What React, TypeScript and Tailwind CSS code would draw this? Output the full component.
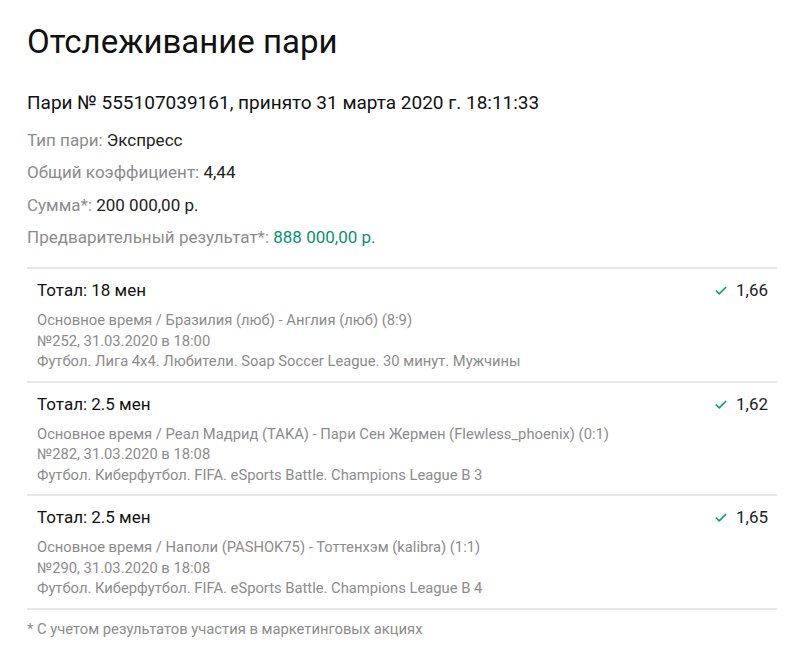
import { Check } from "lucide-react";

type Leg = {
  market: string;
  odds: string;
  event: string;
  number: string;
  league: string;
};

const legs: Leg[] = [
  {
    market: "Тотал: 18 мен",
    odds: "1,66",
    event: "Основное время / Бразилия (люб) - Англия (люб) (8:9)",
    number: "№252, 31.03.2020 в 18:00",
    league: "Футбол. Лига 4x4. Любители. Soap Soccer League. 30 минут. Мужчины",
  },
  {
    market: "Тотал: 2.5 мен",
    odds: "1,62",
    event: "Основное время / Реал Мадрид (TAKA) - Пари Сен Жермен (Flewless_phoenix) (0:1)",
    number: "№282, 31.03.2020 в 18:08",
    league: "Футбол. Киберфутбол. FIFA. eSports Battle. Champions League B 3",
  },
  {
    market: "Тотал: 2.5 мен",
    odds: "1,65",
    event: "Основное время / Наполи (PASHOK75) - Тоттенхэм (kalibra) (1:1)",
    number: "№290, 31.03.2020 в 18:08",
    league: "Футбол. Киберфутбол. FIFA. eSports Battle. Champions League B 4",
  },
];

// Label / value pair in the summary block
const InfoRow = ({ label, value, green }: { label: string; value: string; green?: boolean }) => (
  <p className="h-[32.25px] leading-[32.25px] text-[17px]">
    <span className="text-[#8c8c8c]">{label} </span>
    <span className={green ? "text-[#0b8f70]" : "text-[#222]"}>{value}</span>
  </p>
);

export default function App() {
  return (
    <div
      className="w-[800px] h-[654px] bg-white px-[27px] pt-[22px]"
      style={{ fontFamily: "Roboto, 'Liberation Sans', sans-serif" }}
    >
      <h1 className="text-[33px] leading-[40px] text-[#111]">Отслеживание пари</h1>

      <p className="mt-[27px] text-[19px] leading-[28px] text-[#111]">
        Пари № 555107039161, принято 31 марта 2020 г. 18:11:33
      </p>

      <div className="mt-[7px]">
        <InfoRow label="Тип пари:" value="Экспресс" />
        <InfoRow label="Общий коэффициент:" value="4,44" />
        <InfoRow label="Сумма*:" value="200 000,00 р." />
        <InfoRow label="Предварительный результат*:" value="888 000,00 р." green />
      </div>

      {/* Legs of the accumulator */}
      <div className="mt-[14px] w-[750px] border-t-2 border-[#e8e8e8]">
        {legs.map((leg, i) => (
          <div key={i} className="border-b-2 border-[#e8e8e8] pl-[10px] pr-[9px] pt-[10px] pb-[9px]">
            <div className="flex items-center justify-between h-[24px]">
              <span className="text-[17px] text-[#111]">{leg.market}</span>
              <span className="flex items-center gap-[8px] text-[17px] text-[#222]">
                <Check size={14} strokeWidth={3} className="text-[#12a07a]" />
                {leg.odds}
              </span>
            </div>
            <div className="mt-[7px] text-[14.75px] leading-[20.5px] text-[#8c8c8c]">
              <p>{leg.event}</p>
              <p>{leg.number}</p>
              <p>{leg.league}</p>
            </div>
          </div>
        ))}
      </div>

      <p className="mt-[8px] text-[14.75px] text-[#8c8c8c]">* С учетом результатов участия в маркетинговых акциях</p>
    </div>
  );
}
